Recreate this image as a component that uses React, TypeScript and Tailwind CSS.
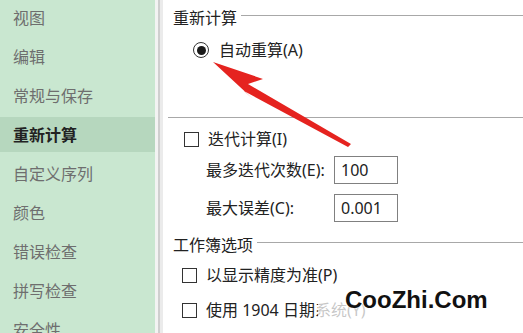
import React from "react";

const items = ["视图", "编辑", "常规与保存", "重新计算", "自定义序列", "颜色", "错误检查", "拼写检查", "安全性"];

function Checkbox() {
  return <div className="w-[15px] h-[15px] border border-[#333] bg-white shrink-0" />;
}

function Heading({ text }: { text: string }) {
  return (
    <div className="h-[22px] flex items-center">
      <span className="text-[16px] leading-[22px] text-[#222] whitespace-nowrap">{text}</span>
      <div className="flex-1 h-px bg-[#a8a8a8] ml-[4px] mb-[5px]" />
    </div>
  );
}

export default function App() {
  return (
    <div className="relative w-[523px] h-[333px] overflow-hidden bg-white flex font-['Noto_Sans','Noto_Sans_CJK_SC',sans-serif]">
      <div className="w-[155px] h-full bg-[#c9e7d0] flex flex-col gap-[4px] shrink-0">
        {items.map((t) => (
          <div
            key={t}
            className={
              "h-[35px] shrink-0 flex items-center pl-[13px] text-[16px] leading-[22px] " +
              (t === "重新计算" ? "bg-[#b6d7be] text-[#222] font-bold" : "text-[#6e6e6e]")
            }
          >
            {t}
          </div>
        ))}
      </div>
      <div className="w-[3px] h-full bg-[#f3f3f3] shrink-0" />
      <div className="w-[2px] h-full bg-[#cfcfcf] shrink-0" />
      <div className="w-[3px] h-full bg-[#ebebeb] shrink-0" />
      <div className="flex-1 h-full flex flex-col pt-[7px] pl-[10px]">
        <Heading text="重新计算" />
        <div className="mt-[10px] h-[22px] flex items-center pl-[20px]">
          <div className="w-[16px] h-[16px] rounded-full border border-[#333] flex items-center justify-center shrink-0">
            <div className="w-[9px] h-[9px] rounded-full bg-[#1a1a1a]" />
          </div>
          <span className="ml-[10px] text-[16px] leading-[22px] text-[#222]">自动重算(A)</span>
        </div>
        <div className="mt-[56px] -ml-[5px] h-px bg-[#a8a8a8]" />
        <div className="mt-[10px] h-[22px] flex items-center pl-[11px]">
          <Checkbox />
          <span className="ml-[9px] text-[16px] leading-[22px] text-[#222]">迭代计算(I)</span>
        </div>
        <div className="mt-[6px] h-[28px] flex items-center pl-[33px]">
          <span className="w-[128px] text-[16px] leading-[22px] text-[#222]">最多迭代次数(E):</span>
          <div className="w-[64px] h-[28px] border border-[#808080] flex items-center pl-[6px] text-[16px] text-[#222]">100</div>
        </div>
        <div className="mt-[10px] h-[28px] flex items-center pl-[33px]">
          <span className="w-[128px] text-[16px] leading-[22px] text-[#222]">最大误差(C):</span>
          <div className="w-[64px] h-[28px] border border-[#808080] flex items-center pl-[6px] text-[16px] text-[#222]">0.001</div>
        </div>
        <div className="mt-[12px]">
          <Heading text="工作簿选项" />
        </div>
        <div className="mt-[8px] h-[22px] flex items-center pl-[9px]">
          <Checkbox />
          <span className="ml-[9px] text-[16px] leading-[22px] text-[#222]">以显示精度为准(P)</span>
        </div>
        <div className="mt-[13px] h-[22px] flex items-center pl-[9px]">
          <Checkbox />
          <span className="ml-[9px] text-[16px] leading-[22px] text-[#222] whitespace-nowrap">使用 1904 日期系统(Y)</span>
        </div>
      </div>

      <svg className="absolute left-0 top-0 pointer-events-none" width="523" height="333" viewBox="0 0 523 333">
        <polygon
          points="213,62 263,79 248,84 351,144 348,147 244,91 253,99"
          fill="#e5231f"
        />
      </svg>

      <div className="absolute left-[318px] top-[290px] w-[190px] h-[30px] bg-white/75" />
      <div className="absolute left-[345px] top-[285px] text-[24px] leading-[30px] font-bold text-[#111] font-['Liberation_Sans',Arial,sans-serif] [text-shadow:0_0_4px_#fff]">
        CooZhi.Com
      </div>
    </div>
  );
}
